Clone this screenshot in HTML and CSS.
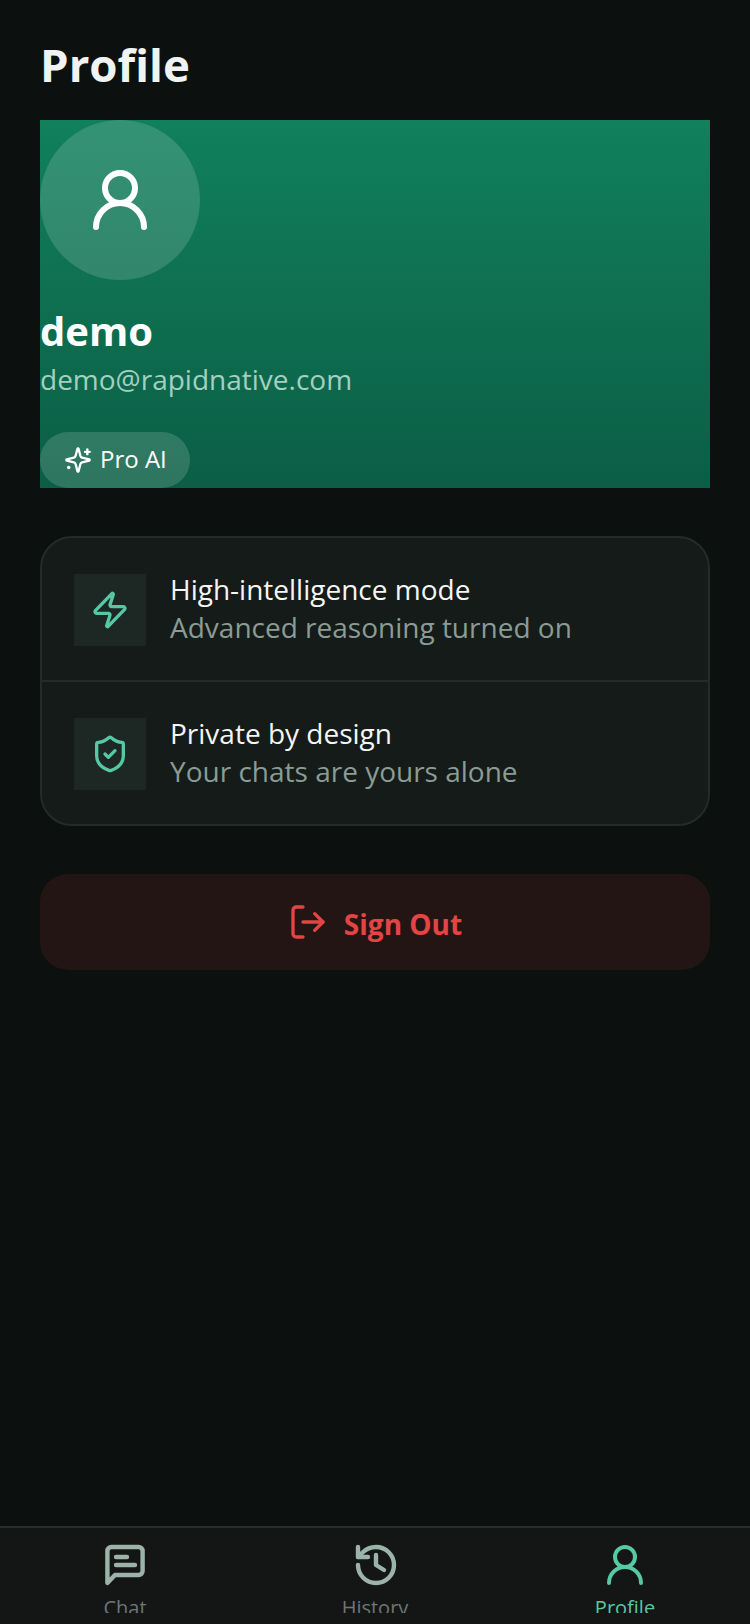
FILE: index.html
```html
<!doctype html>
<html lang="en">
 <head>
  <meta charset="UTF-8">
  <meta name="viewport" content="width=device-width, initial-scale=1.0">
  <title>Profile</title>
  <link rel="stylesheet" href="styles.css">
 </head>
 <body>
  <div class="app">
   <main class="content">
    <h1 class="page-title">Profile</h1>

    <section class="hero">
     <div class="avatar">
      <svg class="avatar-icon" viewBox="0 0 24 24" fill="none" stroke="#fff" stroke-width="2" stroke-linecap="round" stroke-linejoin="round">
       <circle cx="12" cy="8" r="5"/>
       <path d="M20 21a8 8 0 0 0-16 0"/>
      </svg>
     </div>
     <div class="hero-name">demo</div>
     <div class="hero-email">demo@rapidnative.com</div>
     <div class="badge">
      <svg class="badge-icon" viewBox="0 0 24 24" fill="none" stroke="#fff" stroke-width="2" stroke-linecap="round" stroke-linejoin="round">
       <path d="M9.94 15.5a2 2 0 0 0-1.44-1.44l-6.14-1.58a.5.5 0 0 1 0-.96l6.14-1.59A2 2 0 0 0 9.94 8.5l1.58-6.14a.5.5 0 0 1 .96 0l1.58 6.14a2 2 0 0 0 1.44 1.44l6.14 1.58a.5.5 0 0 1 0 .96l-6.14 1.58a2 2 0 0 0-1.44 1.44l-1.58 6.14a.5.5 0 0 1-.96 0z"/>
       <path d="M20 3v4"/>
       <path d="M22 5h-4"/>
       <path d="M4 18.5h.01" stroke-width="3"/>
      </svg>
      <span class="badge-label">Pro AI</span>
     </div>
    </section>

    <section class="info-card">
     <div class="info-row info-row-first">
      <div class="info-icon">
       <svg viewBox="0 0 24 24" fill="none" stroke="#56c9a4" stroke-width="2" stroke-linecap="round" stroke-linejoin="round">
        <path d="M4 14a1 1 0 0 1-.78-1.63l9.9-10.2a.5.5 0 0 1 .86.46l-1.92 6.02A1 1 0 0 0 13 10h7a1 1 0 0 1 .78 1.63l-9.9 10.2a.5.5 0 0 1-.86-.46l1.92-6.02A1 1 0 0 0 11 14z"/>
       </svg>
      </div>
      <div class="info-text">
       <div class="info-title">High-intelligence mode</div>
       <div class="info-sub">Advanced reasoning turned on</div>
      </div>
     </div>
     <div class="info-row">
      <div class="info-icon">
       <svg viewBox="0 0 24 24" fill="none" stroke="#56c9a4" stroke-width="2" stroke-linecap="round" stroke-linejoin="round">
        <path d="M20 13c0 5-3.5 7.5-7.66 8.95a1 1 0 0 1-.67-.01C7.5 20.5 4 18 4 13V6a1 1 0 0 1 1-1c2 0 4.5-1.2 6.24-2.72a1.17 1.17 0 0 1 1.52 0C14.51 3.81 17 5 19 5a1 1 0 0 1 1 1z"/>
        <path d="m9 12 2 2 4-4"/>
       </svg>
      </div>
      <div class="info-text">
       <div class="info-title">Private by design</div>
       <div class="info-sub">Your chats are yours alone</div>
      </div>
     </div>
    </section>

    <button class="sign-out" type="button">
     <svg class="sign-out-icon" viewBox="0 0 24 24" fill="none" stroke="#e44444" stroke-width="2" stroke-linecap="round" stroke-linejoin="round">
      <path d="M9 21H5a2 2 0 0 1-2-2V5a2 2 0 0 1 2-2h4"/>
      <path d="m16 17 5-5-5-5"/>
      <path d="M21 12H9"/>
     </svg>
     <span class="sign-out-label">Sign Out</span>
    </button>
   </main>

   <nav class="tabs">
    <div class="tab">
     <svg class="tab-icon" viewBox="0 0 24 24" fill="none" stroke="#9cb3aa" stroke-width="2.2" stroke-linecap="round" stroke-linejoin="round">
      <path d="M3.2 21V5a2 2 0 0 1 2-2h13.6a2 2 0 0 1 2 2v10a2 2 0 0 1-2 2H7z"/>
      <path d="M7.5 8h5.5"/>
      <path d="M7.5 12h9.5"/>
     </svg>
     <span class="tab-label">Chat</span>
    </div>
    <div class="tab">
     <svg class="tab-icon" viewBox="0 0 24 24" fill="none" stroke="#9cb3aa" stroke-width="2.2" stroke-linecap="round" stroke-linejoin="round">
      <path d="M3.5 12a9 9 0 1 0 9-9 9.75 9.75 0 0 0-6.74 2.74L3.5 8"/>
      <path d="M3.5 3v5h5"/>
      <path d="M12.5 7v5l4 2.5"/>
     </svg>
     <span class="tab-label">History</span>
    </div>
    <div class="tab tab-active">
     <svg class="tab-icon" viewBox="0 0 24 24" fill="none" stroke="#56c9a4" stroke-width="2" stroke-linecap="round" stroke-linejoin="round">
      <circle cx="12" cy="8" r="5"/>
      <path d="M20 21a8 8 0 0 0-16 0"/>
     </svg>
     <span class="tab-label">Profile</span>
    </div>
   </nav>
  </div>
 </body>
</html>
```
FILE: styles.css
```css
* {
  box-sizing: border-box;
}
html, body {
  margin: 0;
  height: 100%;
}
body {
  font-family: "Open Sans", sans-serif;
  background-color: #0c100f;
  color: #fff;
}
.app {
  height: 1624px;
  display: flex;
  flex-direction: column;
  overflow: hidden;
}
.content {
  flex: 1;
  padding: 32px 40px 0;
}
.page-title {
  margin: 0 0 24px;
  font-size: 45.6px;
  line-height: 64px;
  font-weight: 700;
  color: #eff3f2;
}
.hero {
  height: 368px;
  background: linear-gradient(180deg, #11805c 0%, #0b5e45 100%);
  overflow: hidden;
}
.avatar {
  width: 160px;
  height: 160px;
  border-radius: 50%;
  background-color: rgba(255, 255, 255, 0.15);
  display: flex;
  align-items: center;
  justify-content: center;
}
.avatar-icon {
  width: 72px;
  height: 72px;
}
.hero-name {
  margin-top: 25px;
  font-size: 40px;
  line-height: 52px;
  font-weight: 700;
}
.hero-email {
  margin-top: 2px;
  font-size: 28px;
  line-height: 40px;
  color: #a3d0c0;
}
.badge {
  margin-top: 33px;
  width: 150px;
  height: 56px;
  border-radius: 28px;
  background-color: rgba(255, 255, 255, 0.15);
  display: flex;
  align-items: center;
  gap: 8px;
  padding-left: 24px;
  font-size: 24px;
}
.badge-icon {
  width: 28px;
  height: 28px;
}
.badge-label {
  margin-bottom: 4px;
}
.info-card {
  margin-top: 48px;
  height: 290px;
  border: 2px solid #252b29;
  border-radius: 32px;
  background-color: #151b18;
  overflow: hidden;
}
.info-row {
  padding: 36px 32px 34px;
  display: flex;
  gap: 24px;
}
.info-row-first {
  border-bottom: 2px solid #252b29;
}
.info-icon {
  width: 72px;
  height: 72px;
  background-color: #1d2724;
  display: flex;
  align-items: center;
  justify-content: center;
}
.info-icon svg {
  width: 40px;
  height: 40px;
}
.info-text {
  height: 72px;
  margin-top: -4px;
}
.info-title {
  font-size: 28px;
  line-height: 38px;
  color: #f4f6f5;
}
.info-sub {
  font-size: 28px;
  line-height: 38px;
  color: #8a9c95;
}
.sign-out {
  margin-top: 48px;
  width: 100%;
  height: 96px;
  border: none;
  border-radius: 28px;
  background-color: #231514;
  color: #e44444;
  font-family: inherit;
  font-size: 28px;
  font-weight: 700;
  display: flex;
  align-items: center;
  justify-content: center;
  gap: 16px;
}
.sign-out-icon {
  width: 40px;
  height: 40px;
}
.sign-out-label {
  margin-top: 3px;
}
.tabs {
  height: 98px;
  border-top: 2px solid #2a2d2c;
  background-color: #141515;
  display: flex;
}
.tab {
  flex: 1;
  height: 85px;
  padding-top: 13px;
  overflow: hidden;
  display: flex;
  flex-direction: column;
  align-items: center;
}
.tab-icon {
  width: 48px;
  height: 48px;
  flex: none;
}
.tab-label {
  margin-top: 5px;
  font-size: 20px;
  line-height: 28px;
  color: #6f7674;
}
.tab-active .tab-label {
  color: #56c9a4;
}
```
